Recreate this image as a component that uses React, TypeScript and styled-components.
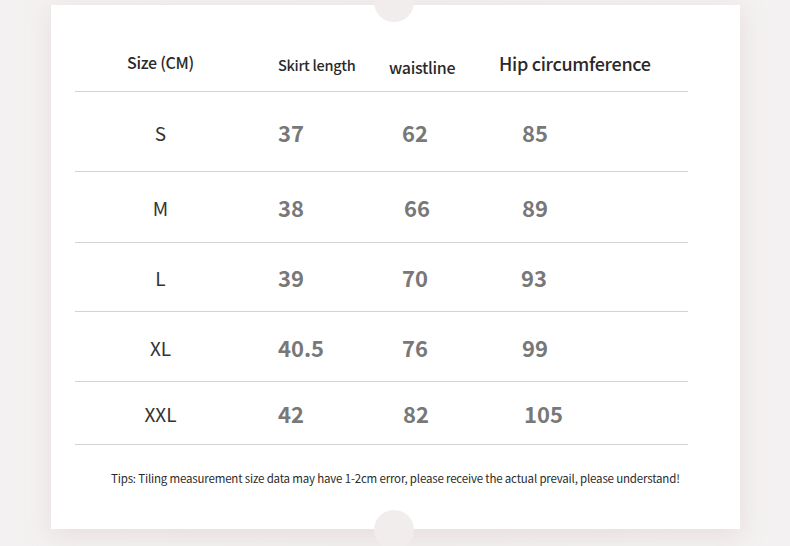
import styled, { createGlobalStyle } from "styled-components";

const GlobalStyle = createGlobalStyle`
  html, body {
    margin: 0;
    padding: 0;
    background: #f3f1f1;
    font-family: "Noto Sans CJK SC", "Noto Sans", sans-serif;
  }
`;

const Page = styled.div`
  width: 790px;
  height: 546px;
  padding: 5px 0 0 51px;
  box-sizing: border-box;
  overflow: hidden;
  background: linear-gradient(90deg, #f3f1f1 0%, #f2eeee 50%, #f3f1f1 100%);
`;

const Card = styled.div`
  position: relative;
  width: 689px;
  height: 524px;
  background: #ffffff;
  box-shadow: 0 6px 22px rgba(214, 190, 190, 0.35);
  display: flex;
  flex-direction: column;
  padding: 0 52px 0 24px;
  box-sizing: border-box;

  /* ticket notches */
  &::before,
  &::after {
    content: "";
    position: absolute;
    left: 323px;
    width: 40px;
    height: 40px;
    border-radius: 50%;
    background: #f1eded;
  }
  &::before {
    top: -23px;
  }
  &::after {
    bottom: -21px;
  }
`;

const Row = styled.div<{ $h: number; $top?: number }>`
  display: grid;
  grid-template-columns: 203px 111px 110px 1fr;
  align-items: center;
  height: ${(p) => p.$h}px;
  padding-top: ${(p) => p.$top ?? 0}px;
  border-bottom: 1px solid #d6d2d0;
  box-sizing: border-box;
`;

const HeadCell = styled.div<{ $size: number; $shift: number; $center?: boolean }>`
  font-size: ${(p) => p.$size}px;
  color: #2a2a2a;
  font-weight: 500;
  letter-spacing: -0.3px;
  padding-top: ${(p) => p.$shift}px;
  text-align: ${(p) => (p.$center ? "center" : "left")};
  padding-right: ${(p) => (p.$center ? 32 : 0)}px;
  white-space: nowrap;
`;

const SizeCell = styled.div`
  font-size: 19px;
  color: #333;
  text-align: center;
  padding-right: 32px;
  padding-top: 1px;
`;

const Num = styled.div<{ $indent: number }>`
  font-size: 22px;
  font-weight: 700;
  color: #787878;
  padding-left: ${(p) => p.$indent}px;
`;

const Tips = styled.div`
  margin-top: 25px;
  padding-left: 36px;
  font-size: 11.5px;
  color: #2b2b2b;
  letter-spacing: -0.18px;
  white-space: nowrap;
`;

const rows = [
  { size: "S", h: 80, vals: ["37", "62", "85"], ind: [0, 13, 23] },
  { size: "M", h: 71, vals: ["38", "66", "89"], ind: [0, 15, 23] },
  { size: "L", h: 69, vals: ["39", "70", "93"], ind: [0, 13, 22] },
  { size: "XL", h: 70, vals: ["40.5", "76", "99"], ind: [0, 13, 23] },
  { size: "XXL", h: 63, vals: ["42", "82", "105"], ind: [0, 14, 25] },
];

export default function App() {
  return (
    <>
      <GlobalStyle />
      <Page>
        <Card>
          <Row $h={87} $top={27}>
            <HeadCell $size={16} $shift={0} $center>
              Size (CM)
            </HeadCell>
            <HeadCell $size={14.5} $shift={5}>
              Skirt length
            </HeadCell>
            <HeadCell $size={16} $shift={10}>
              waistline
            </HeadCell>
            <HeadCell $size={18} $shift={2}>
              Hip circumference
            </HeadCell>
          </Row>
          {rows.map((r) => (
            <Row key={r.size} $h={r.h}>
              <SizeCell>{r.size}</SizeCell>
              {r.vals.map((v, i) => (
                <Num key={i} $indent={r.ind[i]}>
                  {v}
                </Num>
              ))}
            </Row>
          ))}
          <Tips>
            Tips: Tiling measurement size data may have 1-2cm error, please receive the actual prevail, please
            understand!
          </Tips>
        </Card>
      </Page>
    </>
  );
}
